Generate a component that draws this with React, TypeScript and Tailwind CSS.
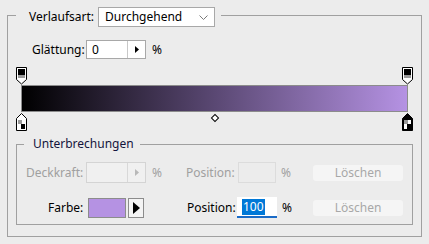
import React from 'react';

const font = 'font-["Noto_Sans","DejaVu_Sans",sans-serif]';

function TopStop() {
  return (
    <svg width="11" height="18" viewBox="0 0 11 18">
      <path d="M0.5 0.5H10.5V12.5L5.5 17L0.5 12.5Z" fill="#fff" stroke="#000" />
      <rect x="2" y="2" width="7" height="6" fill="#000" />
      <rect x="2" y="8" width="7" height="3" fill="#9a9a9a" />
    </svg>
  );
}

function BottomStop({ selected }: { selected: boolean }) {
  return (
    <svg width="11" height="18" viewBox="0 0 11 18">
      <path d="M5.5 0.5L10.5 5.5V17.5H0.5V5.5Z" fill={selected ? '#000' : '#fff'} stroke="#000" />
      <rect x="2" y="7" width="7" height="9" fill="#fff" />
      <rect x="2" y="7" width="4" height="4" fill="#9a9a9a" />
      <rect x="5" y="11" width="4" height="5" fill="#000" />
    </svg>
  );
}

function SmallArrow({ color }: { color: string }) {
  return (
    <svg width="4" height="7" viewBox="0 0 4 7">
      <path d="M0 0L4 3.5L0 7Z" fill={color} />
    </svg>
  );
}

export default function App() {
  return (
    <div className={`w-[429px] h-[244px] bg-[#ececec] pt-[3px] px-[7px] text-[12px] text-black ${font}`}>
      <fieldset className="border border-[#a0a0a0] h-[234px] min-w-0">
        <legend className="ml-[8px] pl-[13px] pr-[6px] pt-[4px]">
          <div className="flex items-center h-[20px]">
            <span>Verlaufsart:</span>
            <div className="ml-[4px] w-[117px] h-[20px] bg-white border border-[#a8a8a8] flex items-center pl-[6px] pr-[6px]">
              <span className="flex-1">Durchgehend</span>
              <svg width="9" height="5" viewBox="0 0 9 5">
                <polyline points="0.5,0.5 4.5,4.5 8.5,0.5" fill="none" stroke="#7a7a7a" />
              </svg>
            </div>
          </div>
        </legend>

        {/* Glättung */}
        <div className="flex items-center mt-[13px] pl-[24px] h-[19px]">
          <span className="w-[54px]">Glättung:</span>
          <div className="w-[60px] h-[19px] bg-white border border-[#a8a8a8] flex">
            <span className="w-[40px] pl-[5px] leading-[17px]">0</span>
            <div className="flex-1 border-l border-[#c8c8c8] flex items-center justify-center">
              <SmallArrow color="#000" />
            </div>
          </div>
          <span className="ml-[6px]">%</span>
        </div>

        {/* Gradient */}
        <div className="mt-[8px] ml-[13px] w-[387px]">
          <div className="relative h-[18px]">
            <div className="absolute left-[-5px] top-0"><TopStop /></div>
            <div className="absolute right-[-5px] top-0"><TopStop /></div>
          </div>
          <div className="h-[27px] border border-[#8c8c8c] bg-[linear-gradient(to_right,#000000,#5a4873_50%,#b592e3)]" />
          <div className="relative h-[19px]">
            <div className="absolute left-[-5px] top-[1px]"><BottomStop selected={false} /></div>
            <div className="absolute left-[191px] top-[3px] w-[6px] h-[6px] rotate-45 border border-black bg-white" />
            <div className="absolute right-[-5px] top-[1px]"><BottomStop selected={true} /></div>
          </div>
        </div>

        {/* Unterbrechungen */}
        <fieldset className="mt-[4px] mx-[8px] border border-[#a0a0a0] h-[90px] min-w-0">
          <legend className="ml-[7px] pl-[9px] pr-[6px] text-[#14143c]">Unterbrechungen</legend>

          <div className="flex items-center h-[21px] mt-[9px] text-[#a0a0a0]">
            <span className="w-[69px] pl-[9px]">Deckkraft:</span>
            <div className="w-[60px] h-[21px] bg-[#f0f0f0] border border-[#d4d4d4] flex">
              <span className="w-[40px]" />
              <div className="flex-1 border-l border-[#d8d8d8] flex items-center justify-center">
                <SmallArrow color="#b8b8b8" />
              </div>
            </div>
            <span className="ml-[6px] w-[34px]">%</span>
            <span className="w-[52px]">Position:</span>
            <div className="w-[38px] h-[21px] border border-[#dcdcdc] bg-[#ececec]" />
            <span className="ml-[5px] w-[32px]">%</span>
            <div className="w-[90px] h-[16px] rounded-[3px] bg-[#f5f5f5] flex items-center justify-center text-[#a8a8a8]">
              Löschen
            </div>
          </div>

          <div className="flex items-center h-[21px] mt-[14px]">
            <span className="w-[71px] pl-[31px]">Farbe:</span>
            <div className="w-[38px] h-[20px] border border-[#8c8c8c] bg-[#b592e3]" />
            <div className="ml-[2px] w-[16px] h-[20px] border border-[#8c8c8c] bg-[#f4f4f4] flex items-center justify-center">
              <svg width="7" height="12" viewBox="0 0 7 12">
                <path d="M0 0L7 6L0 12Z" fill="#000" />
              </svg>
            </div>
            <span className="ml-[43px] w-[50px]">Position:</span>
            <div className="w-[40px] h-[21px] bg-white border-b-2 border-[#1a6bc7] flex items-center pl-[5px]">
              <span className="bg-[#0078d7] text-white leading-[16px] px-[1px]">100</span>
            </div>
            <span className="ml-[5px] w-[31px]">%</span>
            <div className="w-[90px] h-[16px] rounded-[3px] bg-[#f5f5f5] flex items-center justify-center text-[#a8a8a8]">
              Löschen
            </div>
          </div>
        </fieldset>
      </fieldset>
    </div>
  );
}
